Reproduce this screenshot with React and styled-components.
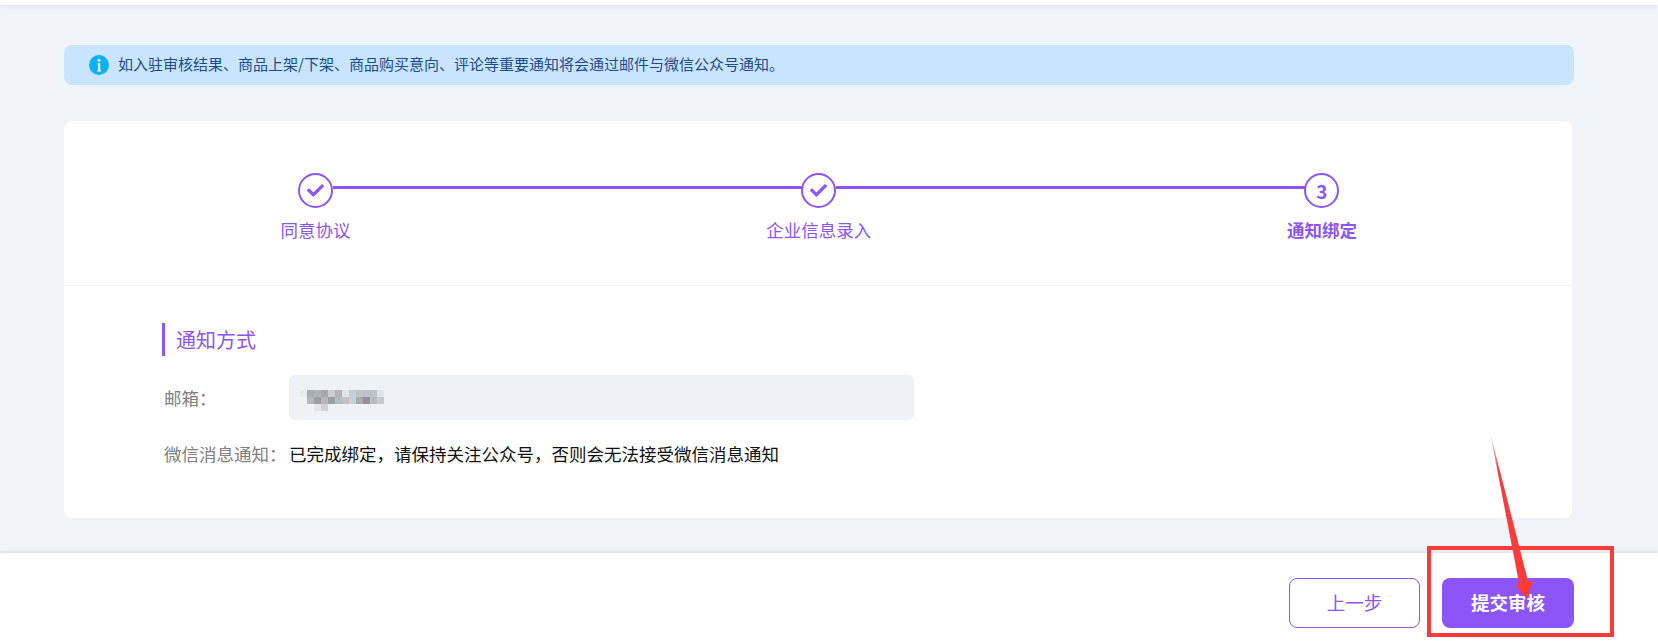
import React from "react";
import styled, { createGlobalStyle } from "styled-components";
import { FaCheck } from "react-icons/fa";

const steps = [
  { label: "同意协议", done: true },
  { label: "企业信息录入", done: true },
  { label: "通知绑定", done: false, num: 3 },
];

// mosaic over the e-mail address: [x, y, colour], 7px cells
const mosaic = [
  [0, 0, "#e6ebef"], [1, 0, "#a9acb0"], [2, 0, "#b0b3b6"], [3, 0, "#a3a9ad"], [4, 0, "#c8ced2"], [5, 0, "#aeb4b8"],
  [6, 0, "#e0e4e8"], [7, 0, "#c5cfd8"], [8, 0, "#c0c3ca"], [9, 0, "#bfc1c8"], [10, 0, "#bcc3c8"], [11, 0, "#dfe3e8"],
  [3, 1, "#b4b7ba"], [4, 1, "#9b9fa4"], [5, 1, "#b5bcc4"], [1, 1, "#b4b7ba"], [2, 1, "#9b9fa4"], [6, 1, "#c4bfc0"],
  [7, 1, "#c6d0d8"], [8, 1, "#a9abb0"], [9, 1, "#8d9296"], [10, 1, "#b8bcc0"], [11, 1, "#c5cacd"],
  [2, 2, "#e2e6e8"], [3, 2, "#cdd3dc"],
];

const App = () => {
  return (
    <>
      <GlobalStyle />
      <Page>
        <TopBar />
        <Main>
          <Alert>
            <InfoIcon />
            <AlertText>如入驻审核结果、商品上架/下架、商品购买意向、评论等重要通知将会通过邮件与微信公众号通知。</AlertText>
          </Alert>
          <Card>
            <Stepper>
              {steps.map((step, i) => (
                <Step key={step.label} $last={i === steps.length - 1}>
                  <StepCircle>{step.done ? <FaCheck size={17} /> : step.num}</StepCircle>
                  <StepLabel $active={!step.done}>{step.label}</StepLabel>
                </Step>
              ))}
            </Stepper>
            <Section>
              <SectionTitle>通知方式</SectionTitle>
              <Row>
                <Label>邮箱：</Label>
                <ReadOnlyField>
                  <Mosaic width="84" height="21" viewBox="0 0 84 21">
                    {mosaic.map(([x, y, fill]) => (
                      <rect key={`${x}-${y}`} x={x * 7} y={y * 7} width="7" height="7" fill={fill} />
                    ))}
                  </Mosaic>
                </ReadOnlyField>
              </Row>
              <TextRow>
                <Label>微信消息通知：</Label>
                <Value>已完成绑定，请保持关注公众号，否则会无法接受微信消息通知</Value>
              </TextRow>
            </Section>
          </Card>
        </Main>
        <Footer>
          <GhostButton>上一步</GhostButton>
          <PrimaryButton>提交审核</PrimaryButton>
        </Footer>
        <RedBox />
        <Arrow width="1658" height="643" viewBox="0 0 1658 643">
          <defs>
            <linearGradient id="tail" x1="1490" y1="433" x2="1520" y2="560" gradientUnits="userSpaceOnUse">
              <stop offset="0" stopColor="#ff3b3b" stopOpacity="0.15" />
              <stop offset="0.3" stopColor="#fb3a3a" />
            </linearGradient>
          </defs>
          <path d="M1490 432 L1519 583 L1516 586 L1527 599 L1533 581 L1528 581 Z" fill="url(#tail)" />
        </Arrow>
      </Page>
    </>
  );
};

const InfoIcon = () => (
  <InfoSvg width="20" height="20" viewBox="0 0 20 20">
    <circle cx="10" cy="10" r="10" fill="#0bb0f5" />
    <circle cx="10" cy="5.2" r="1.5" fill="#fff" />
    <path d="M8.4 8.2h2.8v7h1v1.2H8.2v-1.2h1v-5.8h-.8z" fill="#fff" />
  </InfoSvg>
);

export default App;

// Styled Components

const GlobalStyle = createGlobalStyle`
  * {
    box-sizing: border-box;
  }
  html, body {
    margin: 0;
    padding: 0;
    background: #f0f4f9;
  }
  body {
    font-family: "Noto Sans CJK SC", "Noto Sans", sans-serif;
  }
`;

const Page = styled.div`
  position: relative;
  width: 1658px;
  height: 643px;
  display: flex;
  flex-direction: column;
  overflow: hidden;
  background: #f0f4f9;
`;

const TopBar = styled.div`
  height: 5px;
  flex: none;
  background: #fff;
  box-shadow: 0 1px 4px rgba(0, 0, 0, 0.08);
`;

const Main = styled.main`
  flex: 1;
  padding: 40px 84px 0 64px;
`;

const Alert = styled.div`
  display: flex;
  align-items: center;
  gap: 9px;
  width: 1510px;
  height: 40px;
  padding-left: 25px;
  border-radius: 8px;
  background: #c9e4ff;
  color: #1a4c8e;
  font-size: 15px;
`;

const AlertText = styled.span`
  line-height: 20px;
  margin-top: -3px;
`;

const InfoSvg = styled.svg`
  flex: none;
`;

const Card = styled.section`
  width: 1508px;
  height: 397px;
  margin-top: 36px;
  border-radius: 8px;
  background: #fff;
`;

const Stepper = styled.div`
  display: grid;
  grid-template-columns: repeat(3, 503.2px);
  height: 165px;
  padding-top: 52px;
  border-bottom: 1px solid #f0f2f5;
`;

const Step = styled.div`
  position: relative;
  display: flex;
  flex-direction: column;
  align-items: center;

  ${({ $last }) =>
    !$last &&
    `
    &::after {
      content: "";
      position: absolute;
      top: 13px;
      left: calc(50% + 17px);
      width: calc(100% - 34px);
      height: 3px;
      background: #8b55f8;
    }
  `}
`;

const StepCircle = styled.div`
  display: flex;
  align-items: center;
  justify-content: center;
  width: 35px;
  height: 35px;
  border: 2px solid #8b55f8;
  border-radius: 50%;
  color: #8b55f8;
  font-size: 19px;
  font-weight: 700;
`;

const StepLabel = styled.div`
  margin-top: 9px;
  color: #8b55f8;
  font-size: 17.5px;
  line-height: 26px;
  font-weight: ${({ $active }) => ($active ? 700 : 400)};
`;

const Section = styled.div`
  padding: 37px 0 0 98px;
`;

const SectionTitle = styled.h3`
  margin: 0;
  height: 33px;
  padding-left: 11px;
  border-left: 3px solid #8b55f8;
  color: #8b55f8;
  font-size: 20px;
  font-weight: 400;
  line-height: 33px;
`;

const Row = styled.div`
  display: flex;
  align-items: center;
  margin-top: 19px;
  padding-left: 2px;
`;

const TextRow = styled(Row)`
  margin-top: 21px;
`;

const Label = styled.span`
  flex: none;
  width: 125px;
  color: #808080;
  font-size: 17.5px;
  line-height: 26px;
`;

const ReadOnlyField = styled.div`
  display: flex;
  align-items: center;
  width: 625px;
  height: 45px;
  padding: 5px 0 0 11px;
  border-radius: 6px;
  background: #eef2f6;
`;

const Mosaic = styled.svg`
  display: block;
`;

const Value = styled.span`
  color: #111;
  font-size: 17.5px;
  line-height: 26px;
`;

const Footer = styled.footer`
  flex: none;
  display: flex;
  justify-content: flex-end;
  gap: 22px;
  height: 90px;
  padding: 25px 84px 0 0;
  background: #fff;
  box-shadow: 0 -1px 3px rgba(0, 0, 0, 0.1);
`;

const GhostButton = styled.button`
  width: 131px;
  height: 50px;
  padding: 0 0 2px;
  border: 1px solid #8b55f8;
  border-radius: 8px;
  background: #fff;
  color: #8b55f8;
  font-family: inherit;
  font-size: 18.5px;
  cursor: pointer;
`;

const PrimaryButton = styled.button`
  width: 132px;
  height: 50px;
  padding: 0 0 2px;
  border: none;
  border-radius: 8px;
  background: #8b55f8;
  color: #fff;
  font-family: inherit;
  font-size: 18.5px;
  font-weight: 700;
  cursor: pointer;
`;

// red annotation drawn over the screenshot
const RedBox = styled.div`
  position: absolute;
  left: 1427px;
  top: 546px;
  width: 187px;
  height: 91px;
  border: 4px solid #fb3a3a;
  pointer-events: none;
`;

const Arrow = styled.svg`
  position: absolute;
  left: 0;
  top: 0;
  pointer-events: none;
`;
